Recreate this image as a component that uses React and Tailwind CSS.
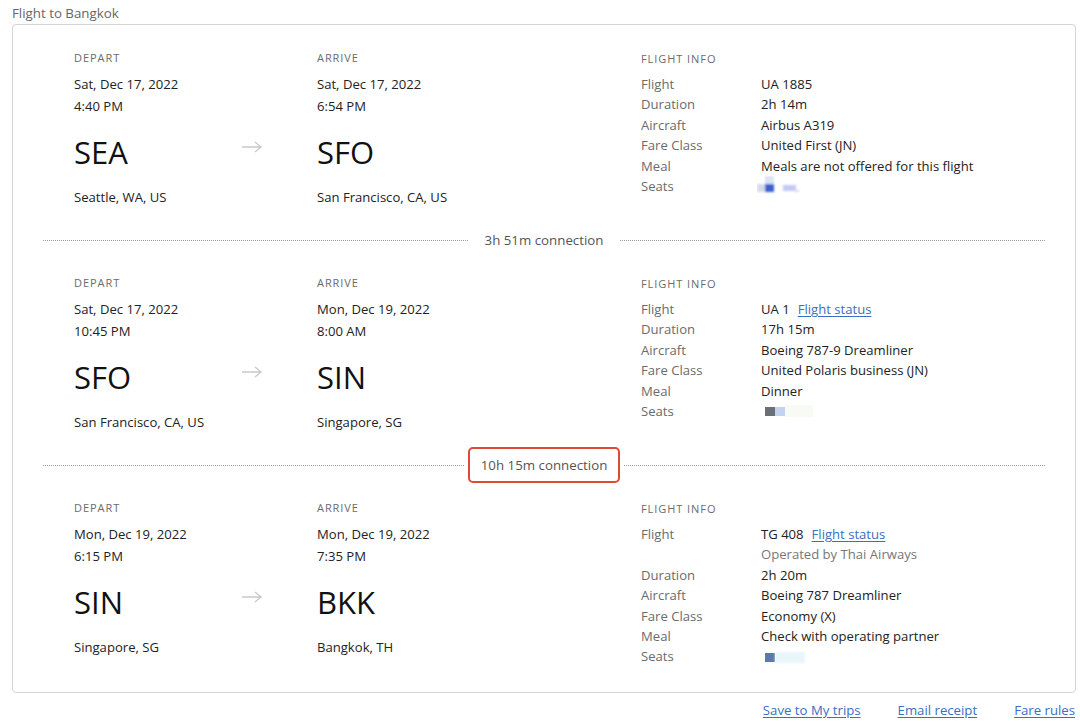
import React from "react";

const segments = [
  {
    depDate: "Sat, Dec 17, 2022",
    depTime: "4:40 PM",
    from: "SEA",
    fromCity: "Seattle, WA, US",
    arrDate: "Sat, Dec 17, 2022",
    arrTime: "6:54 PM",
    to: "SFO",
    toCity: "San Francisco, CA, US",
    flight: "UA 1885",
    status: false,
    duration: "2h 14m",
    aircraft: "Airbus A319",
    fare: "United First (JN)",
    meal: "Meals are not offered for this flight",
    seats: 1,
  },
  {
    depDate: "Sat, Dec 17, 2022",
    depTime: "10:45 PM",
    from: "SFO",
    fromCity: "San Francisco, CA, US",
    arrDate: "Mon, Dec 19, 2022",
    arrTime: "8:00 AM",
    to: "SIN",
    toCity: "Singapore, SG",
    flight: "UA 1",
    status: true,
    duration: "17h 15m",
    aircraft: "Boeing 787-9 Dreamliner",
    fare: "United Polaris business (JN)",
    meal: "Dinner",
    seats: 2,
  },
  {
    depDate: "Mon, Dec 19, 2022",
    depTime: "6:15 PM",
    from: "SIN",
    fromCity: "Singapore, SG",
    arrDate: "Mon, Dec 19, 2022",
    arrTime: "7:35 PM",
    to: "BKK",
    toCity: "Bangkok, TH",
    flight: "TG 408",
    status: true,
    operatedBy: "Operated by Thai Airways",
    duration: "2h 20m",
    aircraft: "Boeing 787 Dreamliner",
    fare: "Economy (X)",
    meal: "Check with operating partner",
    seats: 3,
  },
];

// blurred seat map thumbnails
const SeatBlur = ({ variant }) => {
  if (variant === 1) {
    return (
      <svg width="50" height="20" viewBox="0 0 50 20">
        <defs>
          <filter id="b1" x="-20%" y="-20%" width="140%" height="140%">
            <feGaussianBlur stdDeviation="0.8" />
          </filter>
        </defs>
        <g filter="url(#b1)">
          <rect x="0" y="8" width="8" height="8" fill="#d5dbe6" />
          <rect x="8" y="0" width="9" height="8" fill="#dbe3f5" />
          <rect x="8" y="8" width="9" height="8" fill="#3a5fcf" />
          <rect x="26" y="9" width="13" height="6" fill="#c6c9f6" />
          <rect x="38" y="14" width="4" height="2" fill="#d9dbea" />
        </g>
      </svg>
    );
  }
  if (variant === 2) {
    return (
      <svg width="60" height="16" viewBox="0 0 60 16">
        <defs>
          <filter id="b2" x="-20%" y="-20%" width="140%" height="140%">
            <feGaussianBlur stdDeviation="0.7" />
          </filter>
        </defs>
        <g filter="url(#b2)">
          <rect x="8" y="4" width="10" height="9" fill="#6b7078" />
          <rect x="18" y="4" width="10" height="9" fill="#c3d2ef" />
          <rect x="28" y="2" width="28" height="12" fill="#f7fbf3" />
        </g>
      </svg>
    );
  }
  return (
    <svg width="60" height="16" viewBox="0 0 60 16">
      <defs>
        <filter id="b3" x="-20%" y="-20%" width="140%" height="140%">
          <feGaussianBlur stdDeviation="1.2" />
        </filter>
      </defs>
      <rect x="8" y="4" width="10" height="9" fill="#5a7aa8" />
      <g filter="url(#b3)">
        <rect x="18" y="3" width="30" height="11" fill="#e8f6fb" />
      </g>
    </svg>
  );
};

const Arrow = () => (
  <svg width="22" height="12" viewBox="0 0 22 12" fill="none">
    <path d="M1 6h19M14 1l6 5-6 5" stroke="#c9c9c9" strokeWidth="1.3" />
  </svg>
);

const InfoRow = ({ label, children }) => (
  <div className="flex">
    <div className="w-[120px] text-[#6b6b6b]">{label}</div>
    <div className="text-[#222]">{children}</div>
  </div>
);

const Segment = ({ s }) => (
  <div className="flex pl-[61px] pt-[17px] pb-[14px]">
    {/* Depart */}
    <div className="w-[166px]">
      <div className="text-[11px] leading-[16px] tracking-[0.085em] text-[#6b6b6b]">DEPART</div>
      <div className="mt-[7px] text-[13.1px] leading-[22px] text-[#222]">{s.depDate}</div>
      <div className="text-[13.1px] leading-[22px] text-[#222]">{s.depTime}</div>
      <div className="mt-[15px] text-[31px] leading-[40px] text-[#111]">{s.from}</div>
      <div className="mt-[14px] text-[13.1px] leading-[22px] text-[#222]">{s.fromCity}</div>
    </div>

    <div className="w-[77px] pt-[91px] pl-[1px]">
      <Arrow />
    </div>

    {/* Arrive */}
    <div className="w-[324px]">
      <div className="text-[11px] leading-[16px] tracking-[0.085em] text-[#6b6b6b]">ARRIVE</div>
      <div className="mt-[7px] text-[13.1px] leading-[22px] text-[#222]">{s.arrDate}</div>
      <div className="text-[13.1px] leading-[22px] text-[#222]">{s.arrTime}</div>
      <div className="mt-[15px] text-[31px] leading-[40px] text-[#111]">{s.to}</div>
      <div className="mt-[14px] text-[13.1px] leading-[22px] text-[#222]">{s.toCity}</div>
    </div>

    {/* Flight info */}
    <div className="flex-1 pt-[1px]">
      <div className="text-[11px] leading-[16px] tracking-[0.085em] text-[#6b6b6b]">FLIGHT INFO</div>
      <div className="mt-[7px] text-[13.1px] leading-[20.4px]">
        <InfoRow label="Flight">
          {s.flight}
          {s.status && (
            <a href="#" className="ml-[8px] text-[#3b6fc4] underline underline-offset-2">
              Flight status
            </a>
          )}
        </InfoRow>
        {s.operatedBy && (
          <InfoRow label="">
            <span className="text-[#777]">{s.operatedBy}</span>
          </InfoRow>
        )}
        <InfoRow label="Duration">{s.duration}</InfoRow>
        <InfoRow label="Aircraft">{s.aircraft}</InfoRow>
        <InfoRow label="Fare Class">{s.fare}</InfoRow>
        <InfoRow label="Meal">{s.meal}</InfoRow>
        <div className="flex">
          <div className="w-[116px] text-[#6b6b6b]">Seats</div>
          <div className="h-[20.4px] flex items-center">
            <SeatBlur variant={s.seats} />
          </div>
        </div>
      </div>
    </div>
  </div>
);

const Connection = ({ time, highlight }) => (
  <div className="mx-[30px] h-[36px] flex items-center">
    <div className="flex-1 border-t border-dotted border-[#9a9a9a]" />
    <div
      className={
        highlight
          ? "mx-[4px] h-[36px] px-[11px] pt-[1px] flex items-center rounded-[5px] border-2 border-[#dc4a35] text-[13.3px] text-[#555]"
          : "mx-[4px] h-[36px] px-[11px] pt-[1px] flex items-center border-2 border-transparent text-[13.3px] text-[#555]"
      }
    >
      {time} connection
    </div>
    <div className="flex-1 border-t border-dotted border-[#9a9a9a]" />
  </div>
);

export default function App() {
  return (
    <div className="w-[1080px] h-[724px] bg-white pl-[12px] pr-[4px] font-['Open_Sans',sans-serif] overflow-hidden">
      <div className="h-[24px] text-[13.3px] leading-[26px] text-[#666]">Flight to Bangkok</div>

      <div className="rounded-[4px] border border-[#d4d4d4] pt-[8px] pb-[11px]">
        <Segment s={segments[0]} />
        <Connection time="3h 51m" />
        <Segment s={segments[1]} />
        <Connection time="10h 15m" highlight />
        <Segment s={segments[2]} />
      </div>

      <div className="pt-[7px] pr-[1px] flex justify-end gap-[37px] text-[13.2px] leading-[20px]">
        <a href="#" className="text-[#3b6fc4] underline underline-offset-2">Save to My trips</a>
        <a href="#" className="text-[#3b6fc4] underline underline-offset-2">Email receipt</a>
        <a href="#" className="text-[#3b6fc4] underline underline-offset-2">Fare rules</a>
      </div>
    </div>
  );
}
